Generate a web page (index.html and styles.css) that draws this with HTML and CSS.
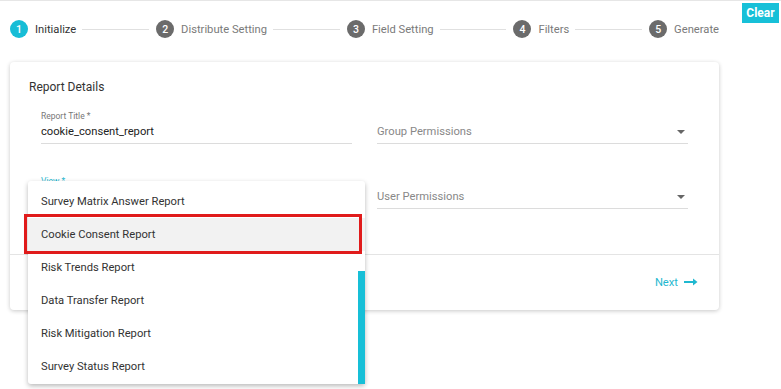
FILE: index.html
```html
<!DOCTYPE html>
<html>
<head>
<meta charset="utf-8">
<link rel="stylesheet" href="styles.css">
</head>
<body>
<div class="page">
  <div class="stepper">
    <div class="step active"><span class="num">1</span><span class="label">Initialize</span></div>
    <div class="line"></div>
    <div class="step"><span class="num">2</span><span class="label">Distribute Setting</span></div>
    <div class="line"></div>
    <div class="step"><span class="num">3</span><span class="label">Field Setting</span></div>
    <div class="line"></div>
    <div class="step"><span class="num">4</span><span class="label">Filters</span></div>
    <div class="line"></div>
    <div class="step"><span class="num">5</span><span class="label">Generate</span></div>
  </div>
  <button class="clear">Clear</button>

  <div class="card">
    <div class="card-body">
      <div class="card-title">Report Details</div>
      <div class="grid">
        <div class="field">
          <div class="flabel">Report Title *</div>
          <div class="fvalue">cookie_consent_report</div>
        </div>
        <div class="field select">
          <div class="flabel"></div>
          <div class="fvalue placeholder">Group Permissions<span class="caret"></span></div>
        </div>
        <div class="field">
          <div class="flabel cyan">View *</div>
          <div class="fvalue"></div>
        </div>
        <div class="field select">
          <div class="flabel"></div>
          <div class="fvalue placeholder">User Permissions<span class="caret"></span></div>
        </div>
      </div>
    </div>
    <div class="card-foot">
      <span class="next">Next <svg width="14" height="8" viewBox="0 0 14 8"><path d="M0 4H10" stroke="#1fb8d0" stroke-width="2"/><path d="M9 0.5L13.5 4L9 7.5Z" fill="#1fb8d0"/></svg></span>
    </div>
  </div>

  <div class="menu">
    <div class="item">Survey Matrix Answer Report</div>
    <div class="item hl">Cookie Consent Report</div>
    <div class="item">Risk Trends Report</div>
    <div class="item">Data Transfer Report</div>
    <div class="item">Risk Mitigation Report</div>
    <div class="item">Survey Status Report</div>
    <div class="scrollbar"></div>
  </div>
  <div class="redbox"></div>
</div>
</body>
</html>
```

FILE: styles.css
```css
* { box-sizing: border-box; }
html, body { margin: 0; padding: 0; background: #fff; }
body { font-family: Roboto, "Liberation Sans", sans-serif; color: #333; }
.page { position: relative; width: 781px; height: 389px; border-top: 1px solid #e6e6e6; overflow: hidden; }

.stepper { display: flex; align-items: center; height: 55px; margin: 0 62px 0 10px; padding-top: 1px; }
.step { display: flex; align-items: center; gap: 7px; white-space: nowrap; }
.num { width: 18px; height: 18px; border-radius: 50%; background: #6b6b6b; color: #fff; font-size: 10.5px; font-weight: 500; display: flex; align-items: center; justify-content: center; }
.step .label { font-size: 11.2px; color: #7a7a7a; }
.step.active .num { background: #17bdd6; }
.step.active .label { color: #333; }
.line { flex: 1; height: 1px; background: #e0e0e0; margin: 0 7px 0 6px; }

.clear { position: absolute; top: 2px; left: 742px; width: 37px; height: 20px; border: 0; border-radius: 0; background: #17c0d8; color: #fff; font-family: Roboto, "Liberation Sans", sans-serif; font-weight: 700; font-size: 12px; padding: 0; }

.card { margin: 6px 0 0 10px; width: 709px; height: 248px; background: #fff; border-radius: 4px; box-shadow: 0 1px 4px rgba(0,0,0,0.22); display: flex; flex-direction: column; }
.card-body { padding: 18px 31px 0 19px; height: 193px; border-bottom: 1px solid #e4e4e4; }
.card-title { font-size: 12px; color: #333; line-height: 14px; }
.grid { display: grid; grid-template-columns: 311px 311px; column-gap: 25px; row-gap: 31px; margin: 16px 0 0 12px; }
.field { height: 34px; display: flex; flex-direction: column; justify-content: flex-start; border-bottom: 1px solid #dcdcdc; }
.flabel { font-size: 8.5px; color: #777; height: 12px; line-height: 12px; }
.flabel.cyan { color: #1fb8d0; }
.fvalue { font-size: 11.2px; line-height: 16px; height: 16px; margin: 2px 0 3px; color: #222; position: relative; }
.placeholder { color: #888; }
.caret { position: absolute; right: 3px; top: 6px; width: 0; height: 0; border-left: 4px solid transparent; border-right: 4px solid transparent; border-top: 4px solid #666; }

.card-foot { flex: 1; display: flex; align-items: center; justify-content: flex-end; padding: 0 21px 1px 0; }
.next { color: #1fb8d0; font-size: 11.2px; display: flex; align-items: center; gap: 6px; }

.menu { position: absolute; left: 28px; top: 180px; width: 337px; padding: 4px 0 1px; background: #fff; border-radius: 3px; box-shadow: 0 2px 5px rgba(0,0,0,0.28); }
.item { height: 33px; line-height: 33px; padding-left: 13px; font-size: 11.2px; color: #333; }
.item.hl { background: #f2f2f2; }
.scrollbar { position: absolute; right: 0; top: 90px; bottom: 0; width: 7px; background: #17bfd7; }
.redbox { position: absolute; left: 24px; top: 213px; width: 338px; height: 40px; border: 3px solid #e01b1b; }
```
